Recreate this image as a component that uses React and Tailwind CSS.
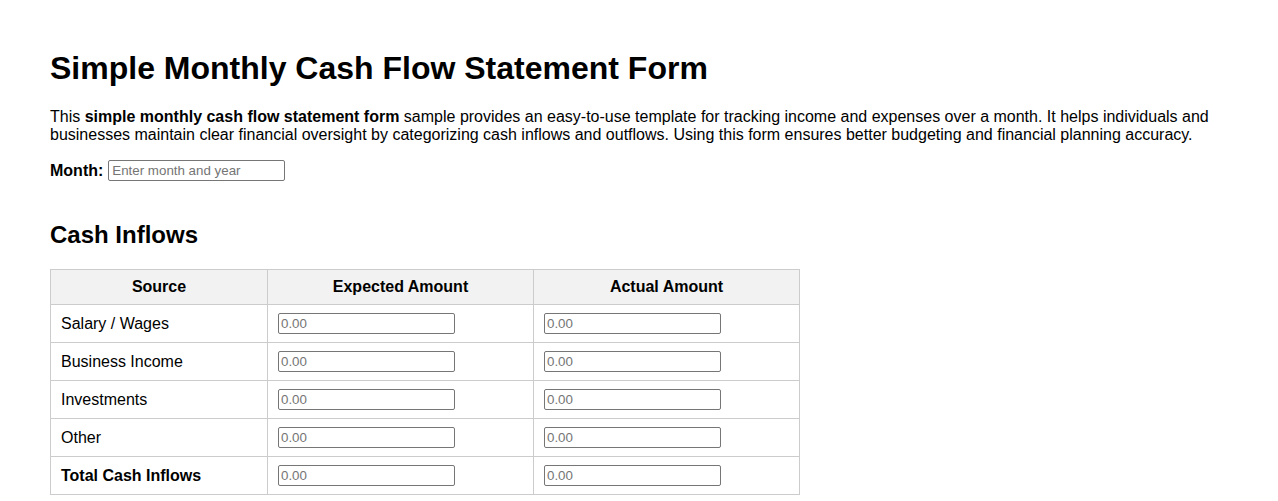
import React from 'react'

const rows = ["Salary / Wages", "Business Income", "Investments", "Other"];

const AmountInput = () => (
    <input
        type="text"
        placeholder="0.00"
        className="block w-[177px] h-[21px] border border-[#767676] rounded-[2px] px-[2px] text-[13.33px] text-black placeholder-[#757575] bg-white outline-none"
    />
);

const cell = "border border-[#cccccc] px-[10px] py-[8px] leading-[18px]";

const App = () => {
    return (
        <div className="bg-white min-h-screen px-[50px] pt-[29px] font-['Liberation_Sans',Arial,sans-serif] text-black">
            <h1 className="text-[32px] font-bold leading-[37px] my-[21px]">Simple Monthly Cash Flow Statement Form</h1>
            <p className="text-[16px] leading-[18px] mb-[16px]">
                This <strong>simple monthly cash flow statement form</strong> sample provides an easy-to-use template for tracking income and expenses over a month. It helps individuals and businesses maintain clear financial oversight by categorizing cash inflows and outflows. Using this form ensures better budgeting and financial planning accuracy.
            </p>
            <div className="flex items-center gap-[5px] h-[21px]">
                <label className="text-[16px] font-bold">Month:</label>
                <input
                    type="text"
                    placeholder="Enter month and year"
                    className="w-[177px] h-[21px] border border-[#767676] rounded-[2px] px-[3px] text-[13.33px] placeholder-[#757575] outline-none"
                />
            </div>

            <h2 className="text-[24px] font-bold leading-[28px] mt-[40px] mb-[20px]">Cash Inflows</h2>
            <table className="border-collapse table-fixed w-[749px] text-[16px]">
                <thead>
                    <tr className="bg-[#f2f2f2]">
                        <th className={`w-[217px] font-bold ${cell}`}>Source</th>
                        <th className={`w-[266px] font-bold ${cell}`}>Expected Amount</th>
                        <th className={`w-[266px] font-bold ${cell}`}>Actual Amount</th>
                    </tr>
                </thead>
                <tbody>
                    {rows.map((r) => (
                        <tr key={r}>
                            <td className={cell}>{r}</td>
                            <td className={cell}><AmountInput /></td>
                            <td className={cell}><AmountInput /></td>
                        </tr>
                    ))}
                    <tr>
                        <td className={`font-bold ${cell}`}>Total Cash Inflows</td>
                        <td className={cell}><AmountInput /></td>
                        <td className={cell}><AmountInput /></td>
                    </tr>
                </tbody>
            </table>
            <div className="h-[40px]" />
        </div>
    )
}

export default App
